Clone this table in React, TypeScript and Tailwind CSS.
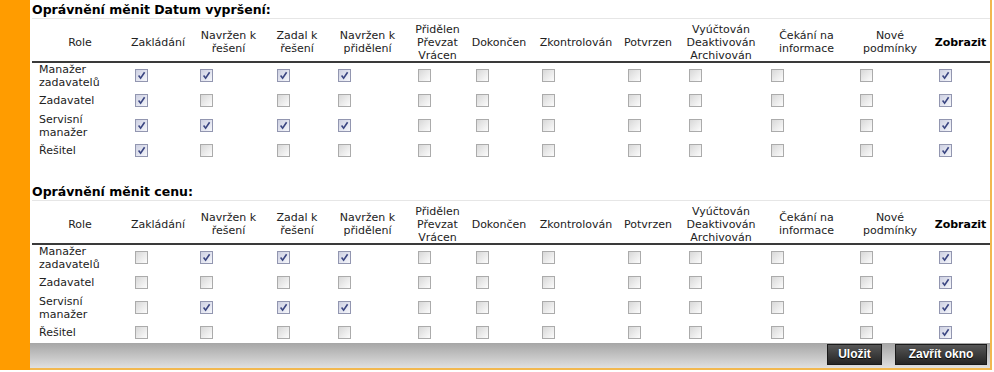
import React from 'react';

type Col = { label: React.ReactNode; w: string; cb: string; bold?: boolean };

const cols: Col[] = [
  { label: 'Zakládání', w: 'w-[60px]', cb: 'ml-[7px]' },
  { label: <>Navržen k<br />řešení</>, w: 'w-[81px]', cb: 'ml-[12px]' },
  { label: <>Zadal k<br />řešení</>, w: 'w-[56px]', cb: 'ml-[8px]' },
  { label: <>Navržen k<br />přidělení</>, w: 'w-[85px]', cb: 'ml-[13px]' },
  { label: <>Přidělen<br />Převzat<br />Vrácen</>, w: 'w-[55px]', cb: 'ml-[8px]' },
  { label: 'Dokončen', w: 'w-[68px]', cb: 'ml-[11px]' },
  { label: 'Zkontrolován', w: 'w-[86px]', cb: 'ml-[9px]' },
  { label: 'Potvrzen', w: 'w-[58px]', cb: 'ml-[9px]' },
  { label: <>Vyúčtován<br />Deaktivován<br />Archivován</>, w: 'w-[88px]', cb: 'ml-[12px]' },
  { label: <>Čekání na<br />informace</>, w: 'w-[83px]', cb: 'ml-[6px]' },
  { label: <>Nové<br />podmínky</>, w: 'w-[84px]', cb: 'ml-[12px]' },
  { label: 'Zobrazit', w: 'w-[57px]', cb: 'ml-[7px]', bold: true },
];

const roles: React.ReactNode[] = [
  <>Manažer<br />zadavatelů</>,
  'Zadavatel',
  <>Servisní<br />manažer</>,
  'Řešitel',
];

// 1 = zaškrtnuto
const datum = [
  [1, 1, 1, 1, 0, 0, 0, 0, 0, 0, 0, 1],
  [1, 0, 0, 0, 0, 0, 0, 0, 0, 0, 0, 1],
  [1, 1, 1, 1, 0, 0, 0, 0, 0, 0, 0, 1],
  [1, 0, 0, 0, 0, 0, 0, 0, 0, 0, 0, 1],
];

const cena = [
  [0, 1, 1, 1, 0, 0, 0, 0, 0, 0, 0, 1],
  [0, 0, 0, 0, 0, 0, 0, 0, 0, 0, 0, 1],
  [0, 1, 1, 1, 0, 0, 0, 0, 0, 0, 0, 1],
  [0, 0, 0, 0, 0, 0, 0, 0, 0, 0, 0, 1],
];

const Check: React.FC<{ on: boolean }> = ({ on }) => (
  <span
    className={
      on
        ? 'flex h-[13px] w-[13px] items-center justify-center border border-[#9296b0] bg-linear-to-br from-[#cdd0e2] to-[#f6f7fb]'
        : 'flex h-[13px] w-[13px] items-center justify-center border border-[#ababab] bg-linear-to-br from-[#d8d8d8] to-[#fcfcfc]'
    }
  >
    {on && (
      <svg width="9" height="9" viewBox="0 0 9 9">
        <path d="M1.6 4.6 L3.6 7.2 L7.6 1.2" stroke="#3b4682" strokeWidth="1.6" fill="none" />
      </svg>
    )}
  </span>
);

const Section: React.FC<{ title: string; data: number[][]; last?: boolean }> = ({ title, data, last }) => (
  <div className={last ? '' : 'mb-[19px]'}>
    <div className="h-[19px] border-b border-[#e6e6e6] pt-[3px] text-[12.5px] leading-[14px] font-bold text-black">
      {title}
    </div>
    <div className="flex h-[44px] items-center border-b-2 border-[#3a3a3a] pt-[4px] text-center">
      <div className="w-[96px]">Role</div>
      {cols.map((c, i) => (
        <div key={i} className={c.bold ? `${c.w} font-bold text-black` : c.w}>
          {c.label}
        </div>
      ))}
    </div>
    {data.map((row, r) => (
      <div key={r} className="flex h-[25px] items-center">
        <div className="w-[96px] pl-[7px]">{roles[r]}</div>
        {cols.map((c, i) => (
          <div key={i} className={c.w}>
            <div className={c.cb}>
              <Check on={row[i] === 1} />
            </div>
          </div>
        ))}
      </div>
    ))}
  </div>
);

export default function App() {
  return (
    <div className="h-[372px] w-[994px] overflow-hidden bg-white font-['DejaVu_Sans',Verdana,sans-serif] text-[11px] leading-[13px] text-[#222]">
      <div className="flex h-[370px] w-[992px]">
        <div className="w-[30px] shrink-0 bg-[#ff9c00]" />
        <div className="flex flex-1 flex-col border-r-2 border-b-2 border-[#f2b84f]">
          <div className="h-[343px] overflow-hidden pl-[2px]">
            <Section title="Oprávnění měnit Datum vypršení:" data={datum} />
            <Section title="Oprávnění měnit cenu:" data={cena} last />
          </div>
          <div className="flex flex-1 items-start justify-end gap-[13px] bg-linear-to-b from-[#a6a6a6] to-[#e0e0e0] pt-[1px] pr-[3px] font-['Liberation_Sans',Arial,sans-serif] text-[12px] font-bold text-white">
            <button className="h-[21px] w-[55px] border border-[#1a1a1a] bg-linear-to-b from-[#575757] to-[#262626] [text-shadow:0_1px_1px_#000]">
              Uložit
            </button>
            <button className="h-[21px] w-[92px] border border-[#1a1a1a] bg-linear-to-b from-[#575757] to-[#262626] [text-shadow:0_1px_1px_#000]">
              Zavřít okno
            </button>
          </div>
        </div>
      </div>
    </div>
  );
}
